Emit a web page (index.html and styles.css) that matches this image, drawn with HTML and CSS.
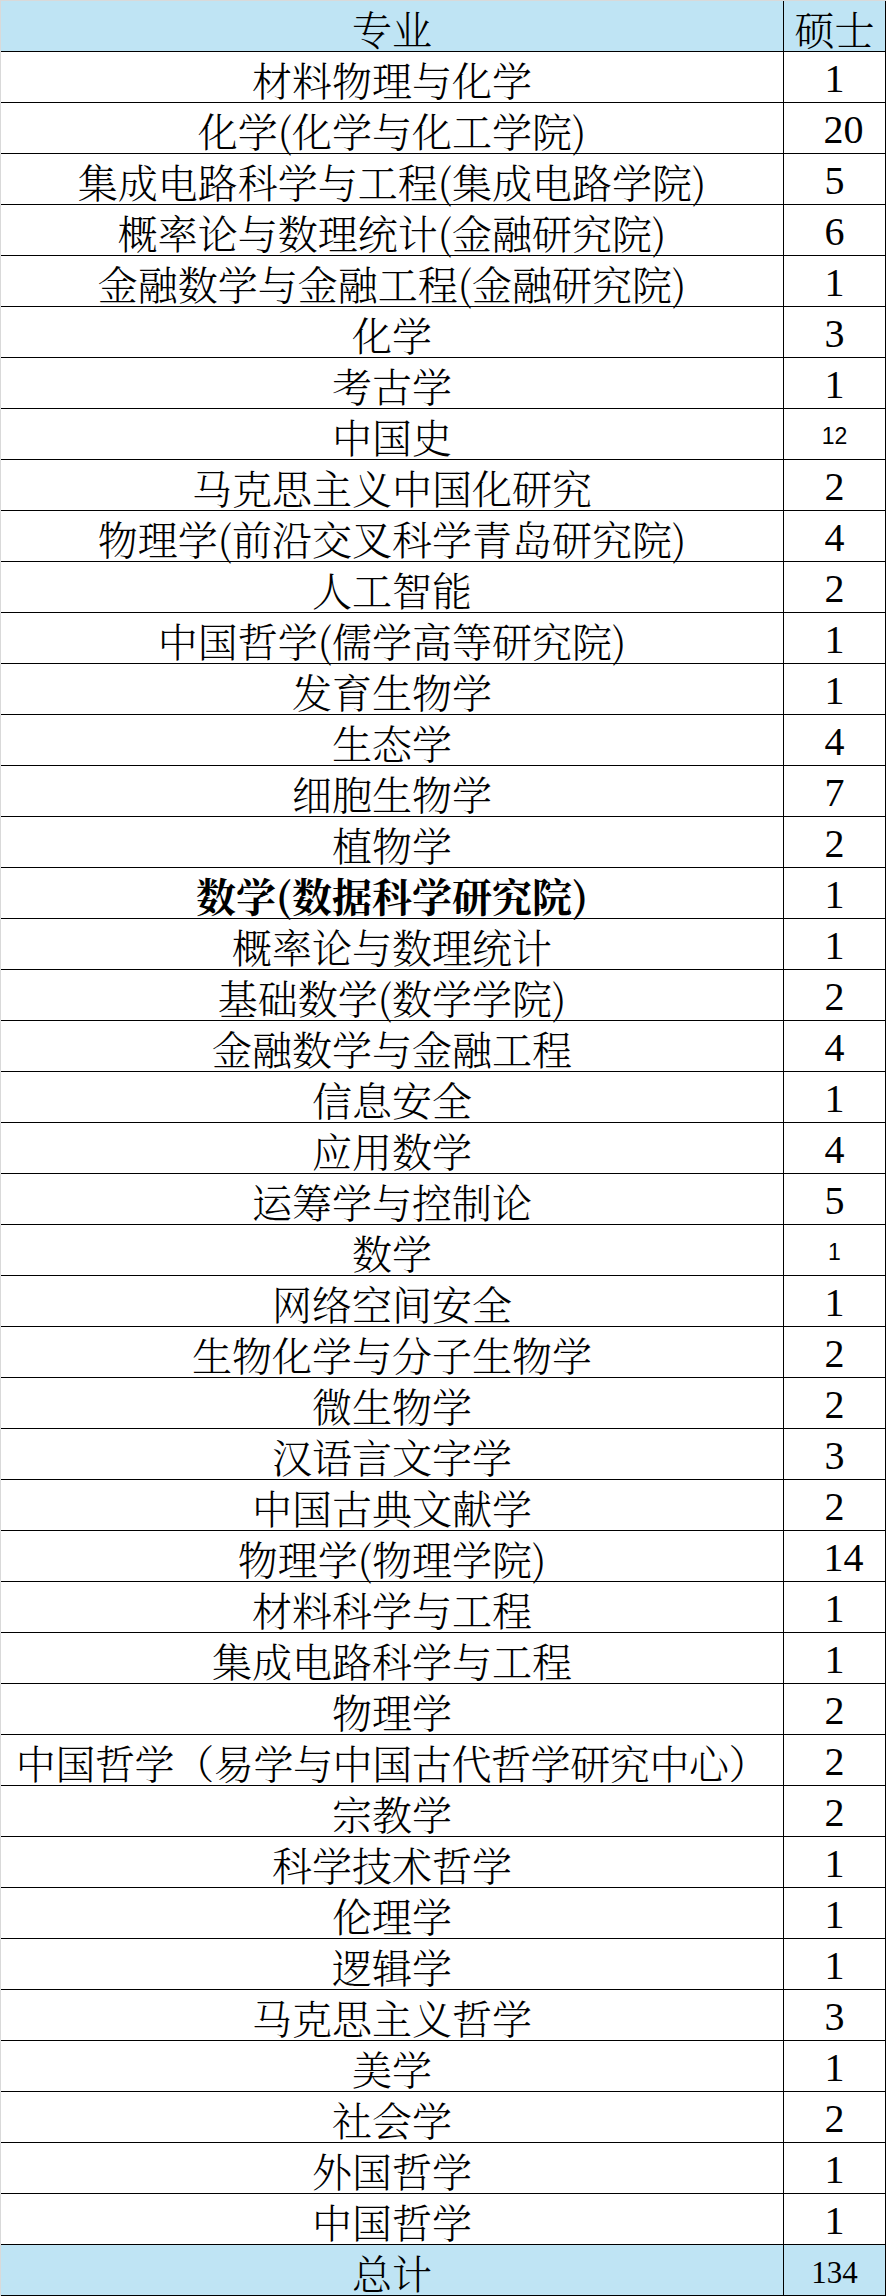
FILE: index.html
```html
<!DOCTYPE html>
<html lang="zh-CN">
<head>
<meta charset="utf-8">
<title>硕士</title>
<link rel="stylesheet" href="styles.css">
</head>
<body>
<div class="table">
  <div class="row head"><div class="name">专业</div><div class="num cjk">硕士</div></div>
  <div class="row"><div class="name">材料物理与化学</div><div class="num">1</div></div>
  <div class="row"><div class="name">化学(化学与化工学院)</div><div class="num shift">20</div></div>
  <div class="row"><div class="name">集成电路科学与工程(集成电路学院)</div><div class="num">5</div></div>
  <div class="row"><div class="name">概率论与数理统计(金融研究院)</div><div class="num">6</div></div>
  <div class="row"><div class="name">金融数学与金融工程(金融研究院)</div><div class="num">1</div></div>
  <div class="row"><div class="name">化学</div><div class="num">3</div></div>
  <div class="row"><div class="name">考古学</div><div class="num">1</div></div>
  <div class="row"><div class="name">中国史</div><div class="num small">12</div></div>
  <div class="row"><div class="name">马克思主义中国化研究</div><div class="num">2</div></div>
  <div class="row"><div class="name">物理学(前沿交叉科学青岛研究院)</div><div class="num">4</div></div>
  <div class="row"><div class="name">人工智能</div><div class="num">2</div></div>
  <div class="row"><div class="name">中国哲学(儒学高等研究院)</div><div class="num">1</div></div>
  <div class="row"><div class="name">发育生物学</div><div class="num">1</div></div>
  <div class="row"><div class="name">生态学</div><div class="num">4</div></div>
  <div class="row"><div class="name">细胞生物学</div><div class="num">7</div></div>
  <div class="row"><div class="name">植物学</div><div class="num">2</div></div>
  <div class="row"><div class="name bold">数学(数据科学研究院)</div><div class="num">1</div></div>
  <div class="row"><div class="name">概率论与数理统计</div><div class="num">1</div></div>
  <div class="row"><div class="name">基础数学(数学学院)</div><div class="num">2</div></div>
  <div class="row"><div class="name">金融数学与金融工程</div><div class="num">4</div></div>
  <div class="row"><div class="name">信息安全</div><div class="num">1</div></div>
  <div class="row"><div class="name">应用数学</div><div class="num">4</div></div>
  <div class="row"><div class="name">运筹学与控制论</div><div class="num">5</div></div>
  <div class="row"><div class="name">数学</div><div class="num small">1</div></div>
  <div class="row"><div class="name">网络空间安全</div><div class="num">1</div></div>
  <div class="row"><div class="name">生物化学与分子生物学</div><div class="num">2</div></div>
  <div class="row"><div class="name">微生物学</div><div class="num">2</div></div>
  <div class="row"><div class="name">汉语言文字学</div><div class="num">3</div></div>
  <div class="row"><div class="name">中国古典文献学</div><div class="num">2</div></div>
  <div class="row"><div class="name">物理学(物理学院)</div><div class="num shift">14</div></div>
  <div class="row"><div class="name">材料科学与工程</div><div class="num">1</div></div>
  <div class="row"><div class="name">集成电路科学与工程</div><div class="num">1</div></div>
  <div class="row"><div class="name">物理学</div><div class="num">2</div></div>
  <div class="row"><div class="name narrow">中国哲学（易学与中国古代哲学研究中心）</div><div class="num">2</div></div>
  <div class="row"><div class="name">宗教学</div><div class="num">2</div></div>
  <div class="row"><div class="name">科学技术哲学</div><div class="num">1</div></div>
  <div class="row"><div class="name">伦理学</div><div class="num">1</div></div>
  <div class="row"><div class="name">逻辑学</div><div class="num">1</div></div>
  <div class="row"><div class="name">马克思主义哲学</div><div class="num">3</div></div>
  <div class="row"><div class="name">美学</div><div class="num">1</div></div>
  <div class="row"><div class="name">社会学</div><div class="num">2</div></div>
  <div class="row"><div class="name">外国哲学</div><div class="num">1</div></div>
  <div class="row"><div class="name">中国哲学</div><div class="num">1</div></div>
  <div class="row total"><div class="name">总计</div><div class="num total-num">134</div></div>
</div>
</body>
</html>
```

FILE: styles.css
```css
html, body {
  margin: 0;
  padding: 0;
  background: #ffffff;
}

.table {
  width: 886px;
  box-sizing: border-box;
  border-top: 1px solid #d9d9d9;
  border-left: 1px solid #d9d9d9;
  display: flex;
  flex-direction: column;
}

.row {
  display: flex;
  height: 51px;
  box-sizing: border-box;
  border-bottom: 1px solid #000;
}

.row.head,
.row.total {
  background: #bfe4f4;
}

.name,
.num {
  display: flex;
  align-items: center;
  justify-content: center;
  padding-top: 4px;
  box-sizing: border-box;
  color: #000;
  white-space: nowrap;
  line-height: 1;
}

.name {
  width: 783px;
  border-right: 1px solid #000;
  font-family: "Noto Serif CJK SC", "Noto Sans CJK SC", serif;
  font-size: 40px;
  font-weight: 300;
}

.name.bold {
  font-weight: 700;
}

.name.narrow {
  letter-spacing: -0.4px;
}

.num {
  width: 102px;
  border-right: 1px solid #000;
  font-family: "Liberation Serif", "Times New Roman", serif;
  font-size: 40px;
}

.num.cjk {
  font-family: "Noto Serif CJK SC", "Noto Sans CJK SC", serif;
  font-weight: 300;
}

.num.shift {
  padding-left: 18px;
}

.num.small {
  font-family: "Liberation Sans", Arial, sans-serif;
  font-size: 23px;
}

.num.total-num {
  font-size: 31px;
}
```
